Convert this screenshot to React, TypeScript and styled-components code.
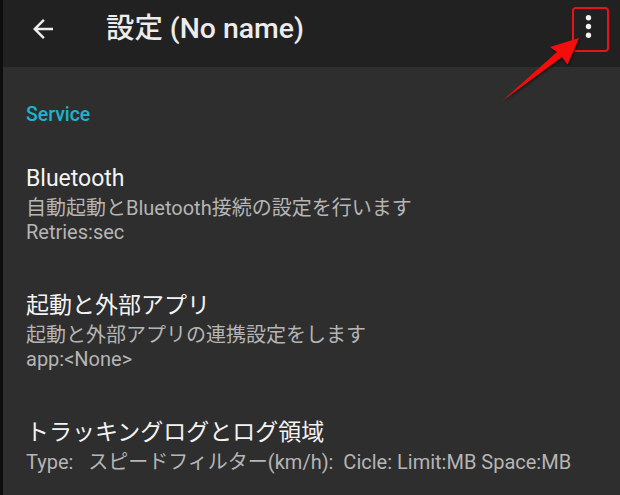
import React from "react";
import styled, { createGlobalStyle } from "styled-components";

const GlobalStyle = createGlobalStyle`
  html, body {
    margin: 0;
    padding: 0;
    background: #2e2e2e;
  }
  body {
    font-family: Roboto, "Noto Sans CJK JP", sans-serif;
  }
`;

type Pref = {
  title: string;
  summary: string[];
};

const prefs: Pref[] = [
  {
    title: "Bluetooth",
    summary: ["自動起動とBluetooth接続の設定を行います", "Retries:sec"],
  },
  {
    title: "起動と外部アプリ",
    summary: ["起動と外部アプリの連携設定をします", "app:<None>"],
  },
  {
    title: "トラッキングログとログ領域",
    summary: ["Type:   スピードフィルター(km/h):  Cicle: Limit:MB Space:MB"],
  },
];

const App = () => {
  return (
    <>
      <GlobalStyle />
      <Screen>
        <AppBar>
          <BackButton aria-label="back">
            <svg width="30" height="30" viewBox="0 0 24 24">
              <path
                fill="#ececec"
                d="M20 11H7.83l5.59-5.59L12 4l-8 8 8 8 1.41-1.41L7.83 13H20v-2z"
              />
            </svg>
          </BackButton>
          <Title>設定 (No name)</Title>
          <Spacer />
          <MenuButton aria-label="more">
            <svg width="35" height="35" viewBox="0 0 24 24">
              <circle cx="12" cy="6" r="1.85" fill="#f2f2f2" />
              <circle cx="12" cy="12" r="1.85" fill="#f2f2f2" />
              <circle cx="12" cy="18" r="1.85" fill="#f2f2f2" />
            </svg>
          </MenuButton>
        </AppBar>

        <Content>
          <Category>Service</Category>
          {prefs.map((p) => (
            <PrefItem key={p.title}>
              <PrefTitle>{p.title}</PrefTitle>
              {p.summary.map((line) => (
                <PrefSummary key={line}>{line}</PrefSummary>
              ))}
            </PrefItem>
          ))}
        </Content>

        <HighlightBox />
        <Pointer width="620" height="495" viewBox="0 0 620 495">
          <defs>
            <filter id="shadow" x="-20%" y="-20%" width="140%" height="140%">
              <feDropShadow dx="1" dy="1.5" stdDeviation="1.2" floodColor="#000" floodOpacity="0.6" />
            </filter>
          </defs>
          <polygon
            filter="url(#shadow)"
            fill="#f50a0a"
            points="579,38 550,47 557,52 502,101 562,57 567.5,64.5"
          />
        </Pointer>
      </Screen>
    </>
  );
};
export default App;

const Screen = styled.div`
  position: relative;
  box-sizing: border-box;
  width: 620px;
  height: 495px;
  overflow: hidden;
  display: flex;
  flex-direction: column;
  border-left: 3px solid #0d0d0d;
  background: #2e2e2e;
`;

const AppBar = styled.header`
  box-sizing: border-box;
  flex-shrink: 0;
  height: 67px;
  padding-bottom: 10px;
  display: flex;
  align-items: center;
  background: #212121;
`;

const BackButton = styled.div`
  width: 30px;
  height: 30px;
  margin-left: 25px;
  display: flex;
`;

const Title = styled.div`
  margin-left: 48px;
  font-size: 28.4px;
  line-height: 32px;
  font-weight: 500;
  color: #ececec;
  white-space: nowrap;
`;

const Spacer = styled.div`
  flex: 1;
`;

const MenuButton = styled.div`
  width: 35px;
  height: 35px;
  margin-right: 14px;
  margin-top: -5px;
  display: flex;
`;

const Content = styled.main`
  flex: 1;
  min-height: 0;
  overflow: hidden;
  padding-left: 23px;
  background: #2e2e2e;
`;

const Category = styled.div`
  padding-top: 36px;
  padding-bottom: 13px;
  font-size: 19.4px;
  line-height: 24px;
  font-weight: 500;
  color: #1cb5cc;
`;

const PrefItem = styled.div`
  padding: 25px 0 23px;
`;

const PrefTitle = styled.div`
  font-size: 23px;
  line-height: 28px;
  color: #f3f3f3;
  margin-bottom: 3px;
  white-space: nowrap;
`;

const PrefSummary = styled.div`
  font-size: 20px;
  line-height: 24px;
  color: #b5b5b5;
  white-space: pre;
`;

const HighlightBox = styled.div`
  position: absolute;
  left: 569px;
  top: 7px;
  width: 37px;
  height: 45px;
  box-sizing: border-box;
  border: 2px solid #e8121c;
  border-radius: 4px;
`;

const Pointer = styled.svg`
  position: absolute;
  left: -3px;
  top: 0;
  pointer-events: none;
`;
